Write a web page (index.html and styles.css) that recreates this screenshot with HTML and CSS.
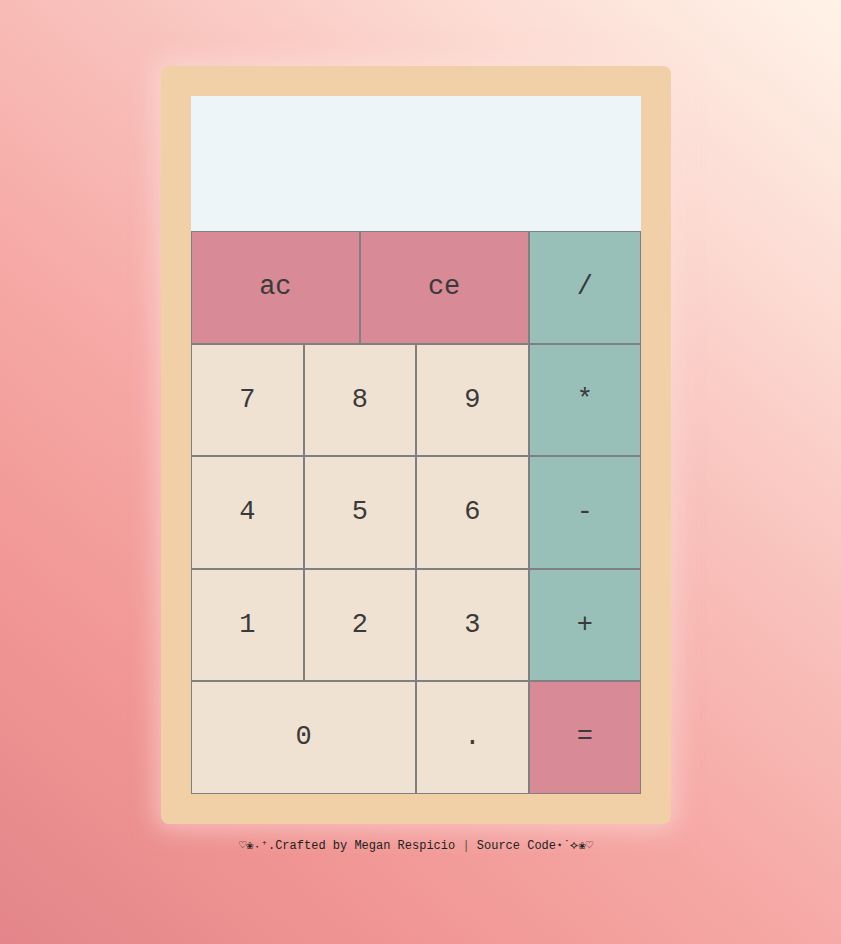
FILE: index.html
```html
<!DOCTYPE html>
<html lang="en">
<head>
<meta charset="utf-8">
<title>Calculator</title>
<link rel="stylesheet" href="styles.css">
</head>
<body>
<main class="page">
  <div class="calculator">
    <div class="display"></div>
    <div class="keys">
      <button class="key key-pink key-wide">ac</button>
      <button class="key key-pink key-wide">ce</button>
      <button class="key key-teal">/</button>
      <button class="key">7</button>
      <button class="key">8</button>
      <button class="key">9</button>
      <button class="key key-teal">*</button>
      <button class="key">4</button>
      <button class="key">5</button>
      <button class="key">6</button>
      <button class="key key-teal">-</button>
      <button class="key">1</button>
      <button class="key">2</button>
      <button class="key">3</button>
      <button class="key key-teal">+</button>
      <button class="key key-zero">0</button>
      <button class="key">.</button>
      <button class="key key-pink">=</button>
    </div>
  </div>
  <footer class="footer">♡❀˖⁺.Crafted by Megan Respicio <span class="sep">|</span> <a class="link">Source Code</a>⋆˙⟡❀♡</footer>
</main>
</body>
</html>
```

FILE: styles.css
```css
html, body {
  margin: 0;
  padding: 0;
}
body {
  min-height: 944px;
  background: linear-gradient(40deg, #e3858a 0%, #f09593 20%, #f6a9a6 42%, #f9c3bd 63%, #fcdcd4 81%, #fff3e8 100%);
  font-family: "Liberation Mono", "Courier New", monospace;
}
.page {
  display: flex;
  flex-direction: column;
  align-items: center;
  padding-top: 66px;
  padding-right: 9px;
}
.calculator {
  width: 450px;
  padding: 30px;
  background: #f1d0a8;
  border-radius: 8px;
  box-shadow: 0 0 24px 6px rgba(255, 228, 222, 0.55);
}
.display {
  height: 135px;
  background: #edf5f8;
}
.keys {
  display: grid;
  grid-template-columns: repeat(8, 56.25px);
  grid-auto-rows: 112.5px;
}
.key {
  grid-column: span 2;
  box-sizing: border-box;
  margin: 0;
  border: 1px solid #808080;
  background: #f0e2d3;
  color: #3a3a3a;
  font-family: "Liberation Mono", "Courier New", monospace;
  font-size: 27px;
  padding: 0;
}
.key-wide {
  grid-column: span 3;
}
.key-zero {
  grid-column: span 4;
}
.key-pink {
  background: #d88a96;
}
.key-teal {
  background: #99c0b8;
}
.footer {
  margin-top: 14px;
  font-size: 12px;
  color: #222;
  white-space: pre;
}
.sep {
  color: #555;
}
.link {
  color: #222;
}
```
